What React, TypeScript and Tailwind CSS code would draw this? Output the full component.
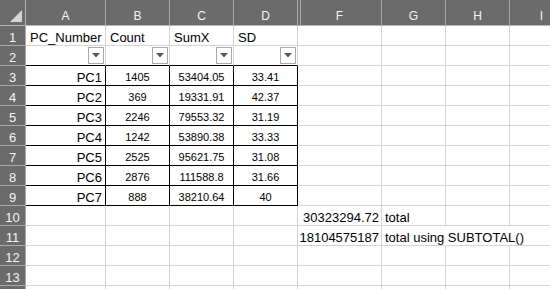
import React from 'react';

type Col = { key: string; w: string };

const cols: Col[] = [
  { key: 'A', w: 'w-[80px]' },
  { key: 'B', w: 'w-[64px]' },
  { key: 'C', w: 'w-[64px]' },
  { key: 'D', w: 'w-[64px]' },
  { key: 'F', w: 'w-[84px]' },
  { key: 'G', w: 'w-[64px]' },
  { key: 'H', w: 'w-[64px]' },
  { key: 'I', w: 'w-[64px]' },
];

const data = [
  ['PC1', '1405', '53404.05', '33.41'],
  ['PC2', '369', '19331.91', '42.37'],
  ['PC3', '2246', '79553.32', '31.19'],
  ['PC4', '1242', '53890.38', '33.33'],
  ['PC5', '2525', '95621.75', '31.08'],
  ['PC6', '2876', '111588.8', '31.66'],
  ['PC7', '888', '38210.64', '40'],
];

const FilterButton = () => (
  <div className="w-[16px] h-[17px] border border-[#ababab] bg-white flex items-center justify-center">
    <svg width="8" height="5" viewBox="0 0 8 5">
      <polygon points="0,0 8,0 4,4.5" fill="#5a5a5a" />
    </svg>
  </div>
);

const Cell: React.FC<{ w: string; cls?: string; children?: React.ReactNode }> = ({ w, cls = '', children }) => (
  <div className={`${w} shrink-0 h-full flex items-end border-r border-b whitespace-nowrap ${cls}`}>{children}</div>
);

const App: React.FC = () => {
  const rows = Array.from({ length: 14 }, (_, i) => i + 1);

  const renderCells = (r: number) => {
    if (r === 1) {
      const labels = ['PC_Number', 'Count', 'SumX', 'SD'];
      return cols.map((c, i) => (
        <Cell key={c.key} w={c.w} cls="border-[#d4d4d4] pl-[4px] text-[13px] leading-[15px]">
          {labels[i] ?? ''}
        </Cell>
      ));
    }
    if (r === 2) {
      return cols.map((c, i) =>
        i < 4 ? (
          <div key={c.key} className={`${c.w} shrink-0 h-full flex items-center justify-end pr-[1px] border-r border-r-[#d4d4d4] border-b border-b-black`}>
            <FilterButton />
          </div>
        ) : (
          <Cell key={c.key} w={c.w} cls="border-[#d4d4d4]" />
        )
      );
    }
    if (r >= 3 && r <= 9) {
      const d = data[r - 3];
      return cols.map((c, i) => {
        if (i === 0)
          return (
            <Cell key={c.key} w={c.w} cls="border-black justify-end pr-[3px] text-[13px] leading-[15px]">
              {d[0]}
            </Cell>
          );
        if (i < 4)
          return (
            <Cell key={c.key} w={c.w} cls="border-black justify-center text-[11px] leading-[15px]">
              {d[i]}
            </Cell>
          );
        return <Cell key={c.key} w={c.w} cls="border-[#d4d4d4]" />;
      });
    }
    if (r === 10 || r === 11) {
      const val = r === 10 ? '30323294.72' : '18104575187';
      const note = r === 10 ? 'total' : 'total using SUBTOTAL()';
      return cols.map((c, i) => {
        if (i === 4)
          return (
            <Cell key={c.key} w={c.w} cls="border-[#d4d4d4] justify-end pr-[2px] text-[13px] leading-[15px]">
              {val}
            </Cell>
          );
        if (i === 5)
          return (
            <Cell key={c.key} w={c.w} cls={`border-b-[#d4d4d4] pl-[3px] text-[13px] leading-[15px] overflow-visible relative z-10 ${r === 11 ? 'border-r-transparent' : 'border-r-[#d4d4d4]'}`}>
              {note}
            </Cell>
          );
        if (i === 6)
          return <Cell key={c.key} w={c.w} cls={`border-b-[#d4d4d4] ${r === 11 ? 'border-r-transparent' : 'border-r-[#d4d4d4]'}`} />;
        return <Cell key={c.key} w={c.w} cls="border-[#d4d4d4]" />;
      });
    }
    return cols.map((c) => <Cell key={c.key} w={c.w} cls="border-[#d4d4d4]" />);
  };

  return (
    <div className="w-[550px] h-[289px] overflow-hidden bg-white text-black font-['Liberation_Sans',Arial,sans-serif]">
      {/* column headers */}
      <div className="flex h-[26px] bg-[#6b6b6b]">
        <div className="w-[26px] shrink-0 h-full border-r border-b border-[#b4b4b4] flex items-end justify-end pr-[2px] pb-[2px]">
          <svg width="13" height="13" viewBox="0 0 13 13">
            <polygon points="0,12 12,0 12,12" fill="#d6d6d6" />
          </svg>
        </div>
        {cols.map((c) => (
          <div
            key={c.key}
            className={`${c.w} shrink-0 h-full flex items-end justify-center pb-[3px] border-r border-r-[#a8a8a8] border-b border-b-[#b4b4b4] text-[12px] leading-[12px] text-[#f4f4f4] ${c.key === 'F' ? 'shadow-[inset_2px_0_0_#6b6b6b,inset_3px_0_0_#a8a8a8]' : ''}`}
          >
            {c.key}
          </div>
        ))}
      </div>
      {/* rows */}
      {rows.map((r) => (
        <div key={r} className="flex h-[20px]">
          <div className="w-[26px] shrink-0 h-full bg-[#6b6b6b] border-r border-b border-[#a8a8a8] flex items-end justify-center text-[13px] leading-[15px] text-[#f4f4f4]">
            {r}
          </div>
          {renderCells(r)}
        </div>
      ))}
    </div>
  );
};

export default App;
